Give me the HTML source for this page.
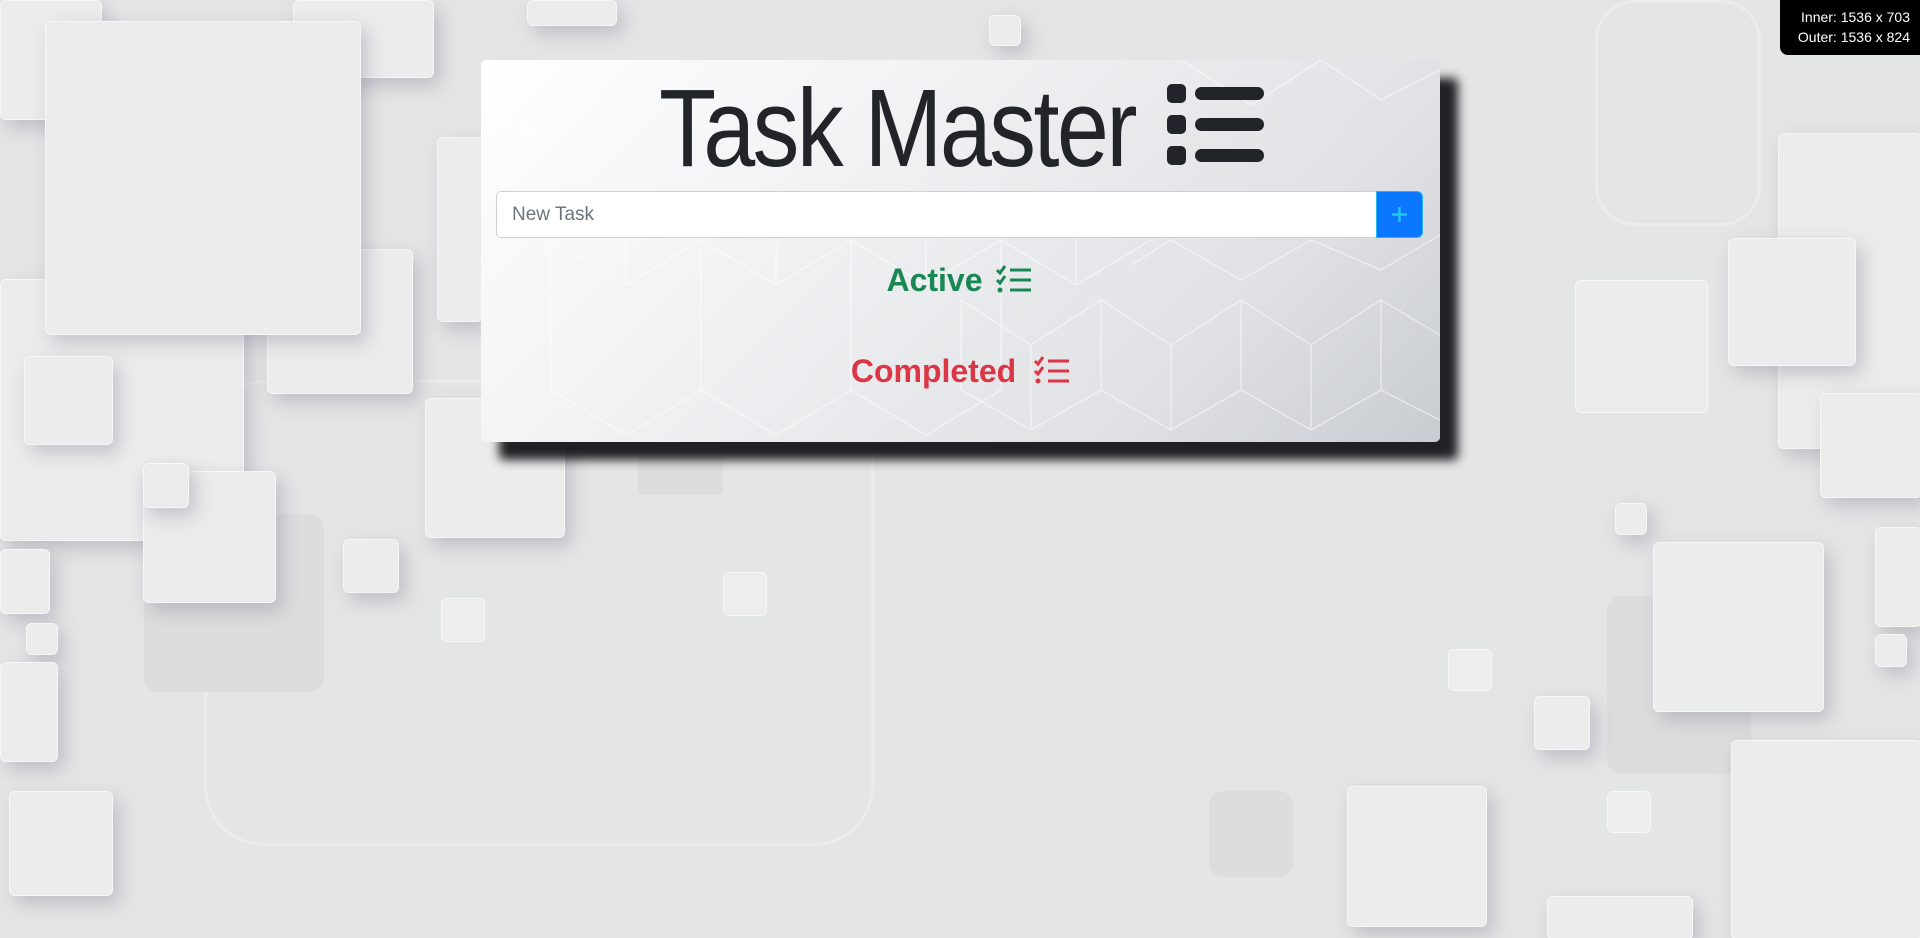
<!DOCTYPE html>
<html><head><meta charset="utf-8"><style>
html,body{margin:0;padding:0;width:1920px;height:938px;overflow:hidden;background:#e4e5e5;font-family:"Liberation Sans",sans-serif;position:relative}
.s{position:absolute;background:#ebecec;border:1px solid #f6f7f7;border-radius:6px;box-shadow:6px 8px 18px rgba(120,120,140,.35)}
.d{position:absolute;background:#dcdddd;border-radius:14px}
.o{position:absolute;border:3px solid #ececec;border-radius:60px}
.card{position:absolute;left:481px;top:60px;width:959px;height:382px;border-radius:5px;background:linear-gradient(135deg,#ffffff 0%,#eef0f2 40%,#dfe1e4 75%,#c8ccd1 100%);box-shadow:18px 18px 10px rgba(20,22,25,.95);overflow:hidden}
.title{position:absolute;left:178px;top:14px;font-size:110px;color:#212529;line-height:1;letter-spacing:-3px;transform:scaleX(0.85);transform-origin:0 0;white-space:nowrap}
.input{position:absolute;left:15px;top:131px;width:879px;height:45px;background:#fff;border:1px solid #ccd0d4;border-radius:5px 0 0 5px}
.input span{position:absolute;left:15px;top:12px;font-size:19px;color:#6c757d}
.btn{position:absolute;left:895px;top:131px;width:47px;height:47px;background:#0b76fe;border-radius:0 6px 6px 0;box-sizing:border-box;border:1px solid #23b5f0}
.lbl{position:absolute;width:100%;text-align:center;font-size:32px;font-weight:bold}
.tip{position:absolute;left:1780px;top:0;width:140px;height:55px;background:#000;border-radius:0 0 0 8px;color:#fff;font-size:14px;line-height:20px;text-align:right;box-sizing:border-box;padding:7px 10px 0 0}
</style></head><body>
<div class="o" style="left:204px;top:380px;width:664px;height:460px"></div>
<div class="o" style="left:1595px;top:0;width:160px;height:220px;border-radius:40px"></div>
<div class="d" style="left:144px;top:514px;width:180px;height:178px"></div>
<div class="d" style="left:1209px;top:791px;width:84px;height:86px"></div>
<div class="d" style="left:1607px;top:596px;width:144px;height:178px"></div>
<div class="d" style="left:638px;top:455px;width:85px;height:40px;border-radius:4px"></div>
<div class="s" style="left:1575px;top:280px;width:131px;height:131px;box-shadow:none;background:#ececec"></div>
<div class="s" style="left:0;top:279px;width:242px;height:260px"></div>
<div class="s" style="left:0;top:0;width:100px;height:118px"></div>
<div class="s" style="left:293px;top:0;width:139px;height:76px"></div>
<div class="s" style="left:267px;top:249px;width:144px;height:143px"></div>
<div class="s" style="left:45px;top:21px;width:314px;height:312px"></div>
<div class="s" style="left:24px;top:356px;width:87px;height:87px"></div>
<div class="s" style="left:143px;top:471px;width:131px;height:130px"></div>
<div class="s" style="left:143px;top:463px;width:44px;height:43px"></div>
<div class="s" style="left:425px;top:398px;width:138px;height:138px"></div>
<div class="s" style="left:343px;top:539px;width:54px;height:52px"></div>
<div class="s" style="left:0;top:549px;width:48px;height:63px"></div>
<div class="s" style="left:26px;top:623px;width:30px;height:30px"></div>
<div class="s" style="left:0;top:662px;width:56px;height:98px"></div>
<div class="s" style="left:9px;top:791px;width:102px;height:103px"></div>
<div class="s" style="left:437px;top:137px;width:44px;height:183px"></div>
<div class="s" style="left:527px;top:0;width:88px;height:24px"></div>
<div class="s" style="left:989px;top:15px;width:30px;height:29px"></div>
<div class="s" style="left:1778px;top:133px;width:142px;height:314px"></div>
<div class="s" style="left:1728px;top:238px;width:126px;height:126px"></div>
<div class="s" style="left:1820px;top:393px;width:100px;height:103px"></div>
<div class="s" style="left:1615px;top:503px;width:30px;height:30px"></div>
<div class="s" style="left:1653px;top:542px;width:169px;height:168px"></div>
<div class="s" style="left:1875px;top:527px;width:45px;height:98px"></div>
<div class="s" style="left:1875px;top:634px;width:30px;height:31px"></div>
<div class="s" style="left:1534px;top:696px;width:54px;height:52px"></div>
<div class="s" style="left:1731px;top:740px;width:189px;height:198px"></div>
<div class="s" style="left:1347px;top:786px;width:138px;height:139px"></div>
<div class="s" style="left:1547px;top:896px;width:144px;height:42px"></div>
<div class="s" style="left:723px;top:572px;width:42px;height:42px;box-shadow:none;background:#ededed"></div>
<div class="s" style="left:441px;top:598px;width:42px;height:42px;box-shadow:none;background:#ededed"></div>
<div class="s" style="left:1448px;top:649px;width:42px;height:40px;box-shadow:none;background:#ededed"></div>
<div class="s" style="left:1607px;top:791px;width:42px;height:40px;box-shadow:none;background:#ededed"></div>

<div class="card">
<svg width="959" height="382" style="position:absolute;left:0;top:0" fill="none" stroke="#ffffff" stroke-opacity=".55" stroke-width="1.3">
<path d="M70 180 L145 225 L220 180 L295 225 L370 180 L445 225 L520 180 L595 225 L670 180 M70 180 V330 L145 375 L220 330 V180 M370 180 V330 L295 375 L220 330 M370 330 L445 375 L520 330 V180 M145 225 V 140 M295 225 V140 M445 225 V140 M595 225 V140"/>
<path d="M480 240 L550 285 L620 240 L690 285 L760 240 L830 285 L900 240 L959 275 M480 240 V330 M550 285 V370 M620 240 V330 M690 285 V370 M760 240 V330 M830 285 V370 M900 240 V330 M480 330 L550 370 L620 330 L690 370 L760 330 L830 370 L900 330 L959 360 M650 205 L690 180 L760 220 L830 180 L900 210 L959 175"/>
<path d="M0 40 L60 80 L120 40 M700 0 L770 45 L840 0 M840 0 L900 40 L959 10"/>
</svg>
<div class="title">Task Master</div>
<svg style="position:absolute;left:686px;top:24px" width="97" height="82" viewBox="0 0 97 82">
<g fill="#212529"><rect x="0" y="0" width="19" height="19" rx="5"/><rect x="0" y="31" width="19" height="19" rx="5"/><rect x="0" y="62" width="19" height="19" rx="5"/>
<rect x="28" y="3" width="69" height="13" rx="6.5"/><rect x="28" y="34" width="69" height="13" rx="6.5"/><rect x="28" y="65" width="69" height="13" rx="6.5"/></g></svg>
<div class="input"><span>New Task</span></div>
<div class="btn"><svg width="45" height="45" style="position:absolute;left:0;top:0"><path d="M22.5 15 V30 M15 22.5 H30" stroke="#26c6f0" stroke-width="2.4"/></svg></div>
<div class="lbl" style="top:202px;color:#198754;left:-26px">Active</div>
<svg style="position:absolute;left:515px;top:205px" width="36" height="30" viewBox="0 0 36 30"><g fill="none" stroke="#198754" stroke-width="3"><path d="M1 5 L4 8 L9 1 M1 15 L4 18 L9 11"/><path d="M14 5 H35 M14 15 H35 M14 25 H35"/></g><circle cx="4" cy="25" r="2.5" fill="#198754"/></svg>
<div class="lbl" style="top:293px;color:#dc3545;left:-27px">Completed</div>
<svg style="position:absolute;left:553px;top:296px" width="36" height="30" viewBox="0 0 36 30"><g fill="none" stroke="#dc3545" stroke-width="3"><path d="M1 5 L4 8 L9 1 M1 15 L4 18 L9 11"/><path d="M14 5 H35 M14 15 H35 M14 25 H35"/></g><circle cx="4" cy="25" r="2.5" fill="#dc3545"/></svg>
</div>
<div class="tip">Inner: 1536 x 703<br>Outer: 1536 x 824</div>
</body></html>
